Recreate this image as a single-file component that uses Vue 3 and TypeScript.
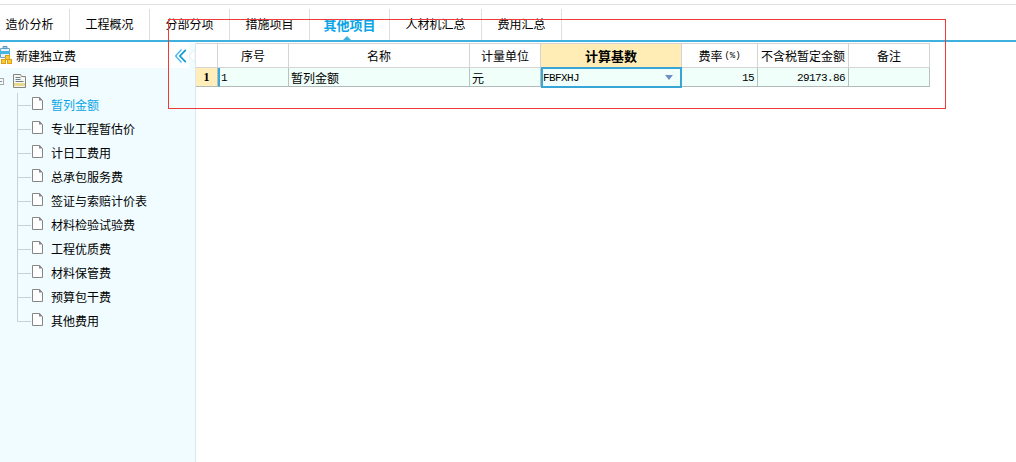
<template>
  <div class="page">
    <div class="top-rule"></div>
    <nav class="tabs">
      <div
        v-for="tab in tabs"
        :key="tab.name"
        class="tab"
        :class="{ active: tab.name === activeTab }"
        :style="{ width: tab.width + 'px' }"
      >
        {{ tab.name }}
      </div>
    </nav>
    <div class="main">
      <aside class="sidebar">
        <div class="side-head">
          <svg class="head-icon" width="13" height="20" viewBox="0 0 13 20">
            <path d="M.5 3.500h9v9h-9z" fill="#e6f3fa" stroke="#6aa6cc" />
            <path d="M3 1.500h4v2H3z" fill="#a9cfe6" stroke="#5b97bd" />
            <path d="M0 6h10v3H0z" fill="#45b4e6" />
            <rect x="5.500" y="10.500" width="4" height="4" fill="#ffc933" stroke="#d9a01a" />
            <rect x="1.500" y="14.500" width="4" height="4" fill="#ffc933" stroke="#d9a01a" />
            <rect x="7.500" y="14.500" width="4" height="4" fill="#ffc933" stroke="#d9a01a" />
          </svg>
          <span class="head-title">新建独立费</span>
          <svg class="collapse" width="12" height="14" viewBox="0 0 12 14">
            <path d="M6.500 .5 .6 7l5.900 6.500" fill="none" stroke="#3db3e6" stroke-width="1.200" />
            <path d="M10.800 .8 4.900 7l5.900 6.200" fill="none" stroke="#149dd2" stroke-width="1.800" />
          </svg>
          <svg class="notch" width="6" height="25" viewBox="0 0 6 25">
            <rect width="6" height="25" fill="#f0fcff" />
            <path d="M6 6 0 13l6 7z" fill="#fff" stroke="#dfe9ec" stroke-width=".7" />
          </svg>
        </div>
        <div class="tree">
          <div class="tree-root">
            <span class="expander"></span>
            <svg class="folder" width="13" height="14" viewBox="0 0 13 14">
              <path d="M.5 .5h7l1 2h4v11H.5z" fill="#f7f7f2" stroke="#85857e" />
              <path d="M2.500 3.500h5M2.500 5.500h5M2.500 7.500h8" stroke="#6d7e8a" />
              <path d="M1 10.500h11" stroke="#e8d88c" stroke-width="3" />
            </svg>
            <span>其他项目</span>
          </div>
          <div
            v-for="(item, i) in items"
            :key="item"
            class="tree-item"
            :class="{ selected: item === activeItem }"
          >
            <span class="branch" :class="{ last: i === items.length - 1 }"></span>
            <svg class="doc" width="11" height="13" viewBox="0 0 11 13">
              <path d="M.5 .5h7l3 3v9H.5z" fill="#fff" stroke="#868686" />
              <path d="M7 .5h1l2.500 3H7z" fill="#868686" />
            </svg>
            <span class="item-text">{{ item }}</span>
          </div>
        </div>
      </aside>
      <section class="content">
        <div class="grid">
          <div v-for="col in columns" :key="col.label" class="th" :class="{ hot: col.hot }">
            <template v-if="col.unit">{{ col.label }}<small>(%)</small></template>
            <template v-else>{{ col.label }}</template>
          </div>
          <div class="td row-no">1</div>
          <div class="td seq mono">1</div>
          <div class="td">暂列金额</div>
          <div class="td">元</div>
          <div class="td editing mono">
            <span>FBFXHJ</span>
            <i class="drop"></i>
          </div>
          <div class="td num mono">15</div>
          <div class="td num mono">29173.86</div>
          <div class="td"></div>
        </div>
      </section>
    </div>
    <div class="red-box"></div>
  </div>
</template>

<script setup lang="ts">
interface Tab {
  name: string;
  width: number;
}

interface Column {
  label: string;
  hot?: boolean;
  unit?: boolean;
}

const tabs: Tab[] = [
  { name: '造价分析', width: 70 },
  { name: '工程概况', width: 80 },
  { name: '分部分项', width: 80 },
  { name: '措施项目', width: 80 },
  { name: '其他项目', width: 80 },
  { name: '人材机汇总', width: 92 },
  { name: '费用汇总', width: 80 },
];
const activeTab = '其他项目';

const items = [
  '暂列金额',
  '专业工程暂估价',
  '计日工费用',
  '总承包服务费',
  '签证与索赔计价表',
  '材料检验试验费',
  '工程优质费',
  '材料保管费',
  '预算包干费',
  '其他费用',
];
const activeItem = '暂列金额';

const columns: Column[] = [
  { label: '' },
  { label: '序号' },
  { label: '名称' },
  { label: '计量单位' },
  { label: '计算基数', hot: true },
  { label: '费率', unit: true },
  { label: '不含税暂定金额' },
  { label: '备注' },
];
</script>

<style>
html,
body {
  margin: 0;
  background: #fff;
  overflow: hidden;
}
</style>

<style scoped>
.page {
  position: relative;
  width: 1016px;
  height: 462px;
  overflow: hidden;
  background: #fff;
  color: #000;
  font: 12px/1 "Noto Sans CJK SC", "Liberation Sans", sans-serif;
}

.top-rule {
  height: 1px;
  margin-top: 4px;
  background: #e2e2e2;
}

.tabs {
  display: flex;
  height: 31px;
  margin-top: 4px;
  border-bottom: 2px solid #3eb1de;
}

.tab {
  display: flex;
  align-items: center;
  justify-content: center;
  box-sizing: border-box;
  position: relative;
  padding-bottom: 1px;
  border-right: 1px solid #dedede;
  font-size: 12px;
}

.tab:first-child {
  padding-right: 10px;
}

.tab.active {
  color: #0aa5e6;
  font-size: 13px;
  font-weight: 700;
}

.tab.active::after {
  content: "";
  position: absolute;
  left: 33px;
  bottom: 0;
  border: 4px solid transparent;
  border-top: 0;
  border-bottom-color: #3eb1de;
}

.main {
  display: flex;
  height: 420px;
}

.sidebar {
  box-sizing: border-box;
  width: 196px;
  margin-top: 1px;
  border-right: 1px solid #dce8ec;
  background: #f0fcff;
}

.side-head {
  display: flex;
  align-items: center;
  height: 25px;
  background: #fff;
}

.head-icon {
  flex: none;
  margin-top: -2px;
}

.head-title {
  margin-left: 3px;
}

.collapse {
  flex: none;
  margin-left: auto;
  margin-right: 2px;
  margin-top: 1px;
}

.notch {
  flex: none;
}

.tree {
  display: flex;
  flex-direction: column;
}

.tree-root,
.tree-item {
  display: flex;
  align-items: center;
  height: 24px;
}

.tree-root {
  margin-top: 1px;
}

.expander {
  flex: none;
  box-sizing: border-box;
  width: 4px;
  height: 7px;
  margin-right: 9px;
  border: 1px solid #a8a8a8;
  border-left: 0;
  background: linear-gradient(#8a8a8a, #8a8a8a) 0 2px / 2px 1px no-repeat;
}

.folder {
  flex: none;
  margin-right: 6px;
}

.branch {
  flex: none;
  width: 14px;
  height: 24px;
  margin-left: 17px;
  background:
    linear-gradient(#c6d4d6, #c6d4d6) 0 0 / 1px 100% no-repeat,
    linear-gradient(#c6d4d6, #c6d4d6) 0 12px / 100% 1px no-repeat;
}

.branch.last {
  background:
    linear-gradient(#c6d4d6, #c6d4d6) 0 0 / 1px 13px no-repeat,
    linear-gradient(#c6d4d6, #c6d4d6) 0 12px / 100% 1px no-repeat;
}

.doc {
  flex: none;
  margin-top: -3px;
  margin-left: 1px;
}

.item-text {
  margin-left: 8px;
}

.selected .item-text {
  color: #0aa5e6;
}

.content {
  flex: 1;
  min-width: 0;
}

.grid {
  display: grid;
  grid-template-columns: 22px 71px 181px 71px 141px 76px 91px 81px;
  grid-template-rows: 25px 19px;
  width: 734px;
  margin-top: 1px;
}

.th,
.td {
  display: flex;
  align-items: center;
  box-sizing: border-box;
  min-width: 0;
  white-space: nowrap;
}

.th {
  justify-content: center;
  border-top: 1px solid #d4d4d4;
  border-right: 1px solid #d4d4d4;
  border-bottom: 1px solid #d4d4d4;
  background: #fff;
}

.th small {
  margin-left: 2px;
  font: 9px "Liberation Mono", monospace;
}

.th.hot {
  background: #ffedb5;
  font-size: 13px;
  font-weight: 700;
}

.td {
  padding: 1px 2px 0;
  border-right: 1px solid #b9c1c0;
  border-bottom: 1px solid #b2bab9;
  background: #f0fff9;
}

.mono {
  font: 11px "Liberation Mono", monospace;
  letter-spacing: -0.6px;
}

.row-no {
  justify-content: center;
  padding: 0;
  background: #ffeeb9;
  font: 700 12px "Liberation Serif", serif;
}

.seq {
  padding-left: 1px;
  border-left: 2px solid #3aa9d9;
}

.num {
  justify-content: flex-end;
  padding-right: 3px;
}

.editing {
  justify-content: space-between;
  margin-top: -1px;
  margin-bottom: -1px;
  padding: 0 7px 0 0;
  border: 2px solid #37a6d6;
}

.drop {
  width: 0;
  height: 0;
  border: 4px solid transparent;
  border-top: 5px solid #6d8fc8;
  border-bottom: 0;
}

.red-box {
  position: absolute;
  left: 168px;
  top: 19px;
  width: 776px;
  height: 88px;
  border: 1px solid #f03a3a;
  pointer-events: none;
}
</style>
